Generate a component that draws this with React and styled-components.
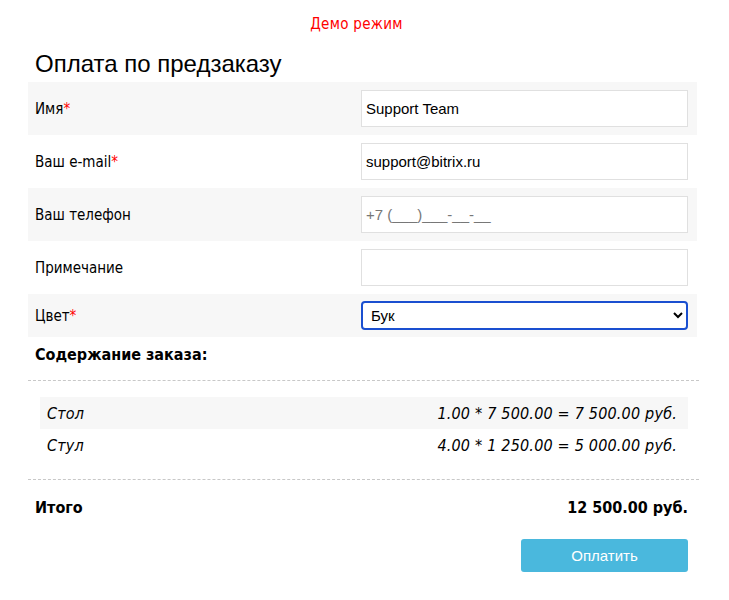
import React from "react";
import styled, { createGlobalStyle } from "styled-components";

const Global = createGlobalStyle`
  html, body { margin: 0; padding: 0; background: #fff; }
  body { font-family: "DejaVu Sans Condensed", "DejaVu Sans", sans-serif; color: #000; }
`;

const Page = styled.div`
  width: 729px;
  box-sizing: border-box;
  padding: 0 30px 0 28px;
`;

const Demo = styled.div`
  color: #ff0000;
  font-size: 15px;
  letter-spacing: 0.3px;
  text-align: center;
  padding-top: 14px;
  padding-right: 14px;
  height: 20px;
  line-height: 20px;
`;

const Title = styled.h1`
  margin: 0;
  font-family: "Liberation Sans", Arial, sans-serif;
  font-weight: normal;
  font-size: 24px;
  line-height: 28px;
  padding: 16px 0 0 7px;
  height: 32px;
  box-sizing: content-box;
`;

const Form = styled.div`
  width: 669px;
  display: flex;
  flex-direction: column;
`;

const Row = styled.div`
  display: grid;
  grid-template-columns: 333px 1fr;
  align-items: center;
  height: ${(p) => p.$h || 53}px;
  background: ${(p) => (p.$gray ? "#f7f7f7" : "#fff")};
  padding-right: 9px;
`;

const Label = styled.div`
  font-size: 15px;
  padding-left: 7px;
`;

const Star = styled.span`
  color: #ff0000;
`;

const Input = styled.input`
  box-sizing: border-box;
  width: 327px;
  height: 37px;
  border: 1px solid #e0e0e0;
  padding: 0 4px;
  font-family: "Liberation Sans", Arial, sans-serif;
  font-size: 15px;
  color: #000;
  outline: none;
  &::placeholder { color: #777; }
`;

const Select = styled.select`
  box-sizing: border-box;
  width: 327px;
  height: 29px;
  border: 2px solid #1a4fd0;
  border-radius: 4px;
  padding: 0 4px;
  font-family: "Liberation Sans", Arial, sans-serif;
  font-size: 15px;
  color: #000;
  background: #fff;
  outline: none;
`;

const Section = styled.div`
  font-weight: bold;
  font-size: 16px;
  padding: 9px 0 0 7px;
  height: 34px;
  box-sizing: border-box;
  line-height: 18px;
`;

const Dashed = styled.div`
  width: 671px;
  border-top: 1px dashed #c8c8c8;
  margin-top: ${(p) => p.$mt || 0}px;
`;

const Items = styled.div`
  padding: 16px 11px 0 12px;
  height: 98px;
  box-sizing: border-box;
  display: flex;
  flex-direction: column;
`;

const Item = styled.div`
  display: flex;
  justify-content: space-between;
  align-items: center;
  height: 32px;
  padding: 0 11px 0 7px;
  background: ${(p) => (p.$gray ? "#f7f7f7" : "#fff")};
  font-style: italic;
  font-size: 16px;
  letter-spacing: 0.2px;
`;

const Total = styled.div`
  display: flex;
  justify-content: space-between;
  align-items: center;
  font-weight: bold;
  font-size: 16px;
  padding: 0 11px 0 7px;
  height: 54px;
`;

const Actions = styled.div`
  display: flex;
  justify-content: flex-end;
  padding-right: 11px;
  padding-top: 5px;
`;

const Button = styled.button`
  width: 167px;
  height: 33px;
  background: #4ab8dd;
  border: none;
  border-radius: 3px;
  color: #fff;
  font-family: "Liberation Sans", Arial, sans-serif;
  font-size: 15px;
`;

export default function App() {
  return (
    <>
      <Global />
      <Page>
        <Demo>Демо режим</Demo>
        <Title>Оплата по предзаказу</Title>
        <Form>
          <Row $gray>
            <Label>Имя<Star>*</Star></Label>
            <Input defaultValue="Support Team" />
          </Row>
          <Row>
            <Label>Ваш e-mail<Star>*</Star></Label>
            <Input defaultValue="support@bitrix.ru" />
          </Row>
          <Row $gray>
            <Label>Ваш телефон</Label>
            <Input placeholder="+7 (___)___-__-__" />
          </Row>
          <Row>
            <Label>Примечание</Label>
            <Input />
          </Row>
          <Row $gray $h={43}>
            <Label>Цвет<Star>*</Star></Label>
            <Select defaultValue="Бук">
              <option>Бук</option>
            </Select>
          </Row>
        </Form>
        <Section>Содержание заказа:</Section>
        <Dashed $mt={9} />
        <Items>
          <Item $gray><span>Стол</span><span>1.00 * 7 500.00 = 7 500.00 руб.</span></Item>
          <Item><span>Стул</span><span>4.00 * 1 250.00 = 5 000.00 руб.</span></Item>
        </Items>
        <Dashed />
        <Total><span>Итого</span><span>12 500.00 руб.</span></Total>
        <Actions><Button>Оплатить</Button></Actions>
      </Page>
    </>
  );
}
